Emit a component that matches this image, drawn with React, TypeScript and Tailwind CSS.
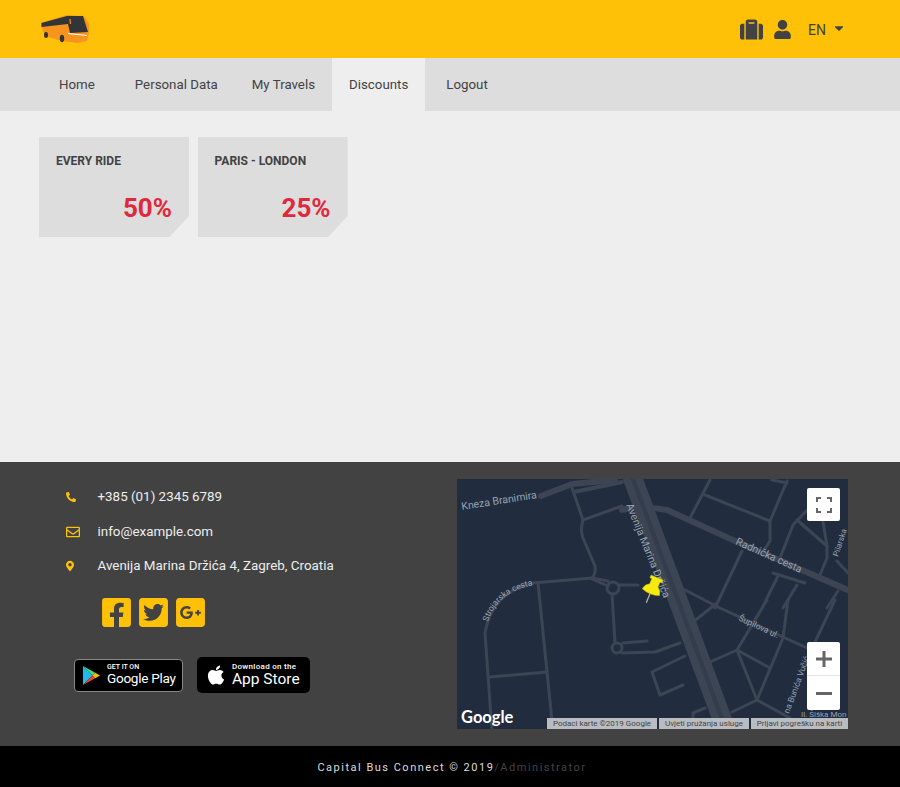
import { FaSuitcase, FaUser, FaPhone, FaRegEnvelope, FaMapMarkerAlt, FaFacebookSquare, FaTwitterSquare, FaGooglePlusSquare, FaApple, FaCaretDown } from 'react-icons/fa';

const navItems = [
  { label: 'Home', cls: 'ml-[42px]' },
  { label: 'Personal Data', cls: 'ml-[6px]' },
  { label: 'My Travels', cls: '' },
  { label: 'Discounts', cls: 'bg-[#eeeeee]' },
  { label: 'Logout', cls: 'ml-[4px]' },
];

const discounts = [
  { title: 'Every ride', value: '50%' },
  { title: 'Paris - London', value: '25%' },
];

// thin streets, in page coordinates (the svg viewBox starts at the map's corner)
const streets = [
  'M572,488 L583,520 L622,506',
  'M583,520 Q580,530 583,538 L595,566 Q596,574 592,578',
  'M533,583 L592,578 L608,581',
  'M592,579 L608,586',
  'M619,585 L638,585',
  'M538,583 L553,731',
  'M533,583 Q492,592 485,633 L492,731',
  'M490,677 L547,672',
  'M612,594 L615,642',
  'M623,643 L647,641 ',
  'M622,653 L655,652 L680,643',
  'M652,672 L685,656 M652,672 L660,695 L683,685',
  'M710,480 L690,518',
  'M705,495 L770,521',
  'M787,481 L770,521 L770,541 L763,552',
  'M772,480 L787,483',
  'M807,510 L793,525 L780,558',
  'M797,520 L827,546 L827,558 L820,575',
  'M823,522 L827,546',
  'M837,561 L850,575',
  'M742,551 L715,608',
  'M685,590 L720,608 L807,648',
  'M773,573 L805,583',
  'M778,576 L762,608',
  'M797,585 L783,608',
  'M838,591 L827,608',
  'M717,603 L693,622',
  'M767,600 L737,650 L757,700 L783,638 L788,600',
  'M835,600 L815,642',
  'M737,650 L710,662',
  'M737,650 L770,668',
  'M757,700 L732,712',
  'M757,700 L790,718',
  'M693,729 L693,713 L705,708',
];

function MapView() {
  return (
    <div className="relative w-[391px] h-[250px] overflow-hidden bg-[#212d3f]">
      <svg viewBox="457 479 391 250" className="block w-full h-full">
        <g fill="none" stroke="#3b4554" strokeLinecap="round" strokeLinejoin="round">
          <g strokeWidth="3">
            {streets.map((d) => (
              <path key={d} d={d} />
            ))}
            <circle cx="613" cy="588" r="6" />
            <circle cx="617" cy="648" r="5" />
          </g>
          <path d="M541,496 L572,484 L615,480" strokeWidth="6" />
          <path d="M574,492 L622,482" strokeWidth="4" />
          <path d="M622,510 Q640,505 667,510 L733,540 L850,591" strokeWidth="6" />
          <path d="M627,479 L722,735" strokeWidth="8" />
          <path d="M639,479 L734,735" strokeWidth="8" />
          <path d="M633,479 L728,735" strokeWidth="4" stroke="#333d4c" />
        </g>
        <g fill="#98a2b0" fontFamily="Roboto, sans-serif">
          <text x="462" y="510" fontSize="10.5" transform="rotate(-9 462 510)">Kneza Branimira</text>
          <text x="626" y="505" fontSize="10.5" transform="rotate(68 626 505)">Avenija Marina Držića</text>
          <text x="735" y="544" fontSize="10.5" transform="rotate(24 735 544)">Radnička cesta</text>
          <text x="738" y="620" fontSize="8.5" transform="rotate(25 738 620)">Šupilova ul.</text>
          <text x="838" y="557" fontSize="8" transform="rotate(-72 838 557)">Pilarska</text>
          <text x="789" y="714" fontSize="8.5" transform="rotate(-70 789 714)">na Bunića Vučić</text>
          <text x="801" y="717" fontSize="8">Il. Šiška Mon</text>
          <path id="strojarska" d="M488,622 Q497,592 534,585" fill="none" />
          <text fontSize="8.5">
            <textPath href="#strojarska">Strojarska cesta</textPath>
          </text>
        </g>
        {/* push pin */}
        <g transform="rotate(22 652 590)">
          <path d="M651.5,594 L651.5,604" stroke="#aeb2ae" strokeWidth="1.3" />
          <path d="M645.5,576.5 H658.5 V579.5 H656.5 V585 Q660.5,587.5 661,592.5 Q652,596 642.5,592.5 Q643,587.5 647.5,585 V579.5 H645.5 Z" fill="#f6ea10" stroke="#bdae10" strokeWidth="0.5" />
        </g>
      </svg>

      <div className="absolute left-[350px] top-[9px] w-[33px] h-[33px] bg-white rounded-[2px] flex items-center justify-center">
        <svg viewBox="0 0 16 16" className="w-[16px] h-[16px]" fill="none" stroke="#666666" strokeWidth="2">
          <path d="M1,5 V1 H5 M11,1 H15 V5 M15,11 V15 H11 M5,15 H1 V11" />
        </svg>
      </div>
      <div className="absolute left-[350px] top-[163px] w-[33px] h-[68px] bg-white rounded-[2px] flex flex-col items-center">
        <div className="h-[34px] w-full flex items-center justify-center border-b border-[#e6e6e6]">
          <svg viewBox="0 0 16 16" className="w-[16px] h-[16px]" fill="#666666">
            <path d="M6.5,0 H9.5 V6.5 H16 V9.5 H9.5 V16 H6.5 V9.5 H0 V6.5 H6.5 Z" />
          </svg>
        </div>
        <div className="h-[34px] w-full flex items-center justify-center">
          <div className="w-[16px] h-[3px] bg-[#666666]" />
        </div>
      </div>

      <div className="absolute left-[4px] bottom-[1px] text-white text-[16.5px] leading-[22px] font-bold font-['Lato',sans-serif]">Google</div>
      <div className="absolute right-0 bottom-0 flex gap-[2px] h-[11px] text-[8px] leading-[11px] text-[#444444] font-['Roboto',sans-serif] whitespace-nowrap">
        <span className="w-[110px] text-center bg-[#b9bcc1]">Podaci karte ©2019 Google</span>
        <span className="w-[90px] text-center bg-[#b9bcc1]">Uvjeti pružanja usluge</span>
        <span className="w-[97px] text-center bg-[#b9bcc1]">Prijavi pogrešku na karti</span>
      </div>
    </div>
  );
}

function BusLogo() {
  return (
    <svg viewBox="0 0 50 30" className="w-[50px] h-[30px]">
      <path d="M1,8.5 L27,1 L44,2 L49,10 L49,19 L47,27 L37,29 L22,27 L5,22 L1,12 Z" fill="#f7941d" />
      <path d="M1.5,9 L27,2 L43,2 L48,18 L30,19 L28,10 L1.5,13 Z" fill="#333438" />
      <path d="M30,5 L30.5,10" stroke="#f7941d" strokeWidth="1.2" />
      <path d="M28,19.5 L47,21.5" stroke="#ffffff" strokeWidth="1" />
      <ellipse cx="6" cy="21" rx="2" ry="3" fill="#333438" />
      <ellipse cx="22" cy="24.5" rx="2.2" ry="3.8" fill="#333438" />
    </svg>
  );
}

function PlayMark() {
  return (
    <svg viewBox="0 0 20 22" className="w-[19px] h-[21px]">
      <path d="M1,1 L11,11 L1,21 Z" fill="#22b8e8" />
      <path d="M1,1 L14,8 L11,11 Z" fill="#3ddc84" />
      <path d="M1,21 L14,14 L11,11 Z" fill="#ea4335" />
      <path d="M14,8 L19,11 L14,14 L11,11 Z" fill="#fbbc04" />
    </svg>
  );
}

export default function App() {
  return (
    <div className="w-[900px] h-[787px] flex flex-col overflow-hidden bg-[#eeeeee] font-['Roboto',sans-serif]">
      <header className="h-[58px] shrink-0 bg-[#ffc107] flex items-center pl-[40px]">
        <BusLogo />
        <div className="ml-auto flex items-center text-[#424242]">
          <FaSuitcase className="w-[23px] h-[23px]" />
          <FaUser className="ml-[11px] w-[17px] h-[19px]" />
          <span className="ml-[17px] mt-[2px] text-[14px] leading-none">EN</span>
          <FaCaretDown className="ml-[6px] -mt-[3px] w-[14px] h-[14px]" />
          <span className="w-[54px]" />
        </div>
      </header>

      <nav className="h-[53px] shrink-0 bg-[#dddddd] flex text-[13.3px] text-[#424242]">
        {navItems.map((item) => (
          <a key={item.label} className={`px-[17px] pt-[1px] flex items-center ${item.cls}`}>
            {item.label}
          </a>
        ))}
      </nav>

      <main className="h-[351px] shrink-0 pt-[26px] pl-[39px] flex items-start gap-[8.6px]">
        {discounts.map((d) => (
          <div
            key={d.title}
            className="w-[150px] h-[100px] bg-[#dddddd] px-[17px] pt-[17px] flex flex-col [clip-path:polygon(0_0,100%_0,100%_79%,87%_100%,0_100%)]"
          >
            <div className="text-[12px] leading-[14px] font-bold uppercase text-[#424242]">{d.title}</div>
            <div className="mt-[20px] text-right text-[26px] leading-[40px] font-bold text-[#e0283c]">{d.value}</div>
          </div>
        ))}
      </main>

      <footer className="h-[284px] shrink-0 bg-[#424242] flex">
        <div className="w-[457px] shrink-0 pt-[25px]">
          <div className="flex flex-col gap-[14.5px] text-[13.4px] leading-[20px] text-[#eeeeee]">
            <div className="flex items-center pl-[66px]">
              <FaPhone className="w-[10px] h-[10px] text-[#ffc107] -scale-x-100" />
              <span className="ml-[21.5px]">+385 (01) 2345 6789</span>
            </div>
            <div className="flex items-center pl-[66px]">
              <FaRegEnvelope className="w-[14px] h-[14px] text-[#ffc107]" />
              <span className="ml-[17.5px]">info@example.com</span>
            </div>
            <div className="flex items-center pl-[66px]">
              <FaMapMarkerAlt className="w-[8px] h-[12px] text-[#ffc107]" />
              <span className="ml-[23.5px]">Avenija Marina Držića 4, Zagreb, Croatia</span>
            </div>
          </div>

          <div className="mt-[20px] pl-[102px] flex gap-[8px] text-[#ffc107]">
            <FaFacebookSquare className="w-[29px] h-[33px]" />
            <FaTwitterSquare className="w-[29px] h-[33px]" />
            <FaGooglePlusSquare className="w-[29px] h-[33px]" />
          </div>

          <div className="mt-[28px] pl-[74px] flex items-center gap-[14px] text-white">
            <div className="w-[109px] h-[33px] bg-black border border-[#888888] rounded-[4px] flex items-center pl-[7px]">
              <PlayMark />
              <div className="ml-[6px] flex flex-col">
                <span className="text-[7px] leading-[7px] font-medium">GET IT ON</span>
                <span className="text-[13.6px] leading-[15px] tracking-[-0.3px]">Google Play</span>
              </div>
            </div>
            <div className="w-[113px] h-[36px] bg-black rounded-[5px] flex items-center pl-[9px]">
              <FaApple className="w-[20px] h-[22px]" />
              <div className="ml-[6px] flex flex-col">
                <span className="text-[8px] leading-[9px] font-medium tracking-[0.3px]">Download on the</span>
                <span className="text-[15.5px] leading-[17px]">App Store</span>
              </div>
            </div>
          </div>
        </div>
        <div className="pt-[17px]">
          <MapView />
        </div>
      </footer>

      <div className="h-[41px] shrink-0 bg-black pt-[3px] pl-[4px] flex items-center justify-center text-[11px] tracking-[1.5px] text-[#dddddd]">
        <span>Capital Bus Connect © 2019</span>
        <span className="text-[#444444]">/Administrator</span>
      </div>
    </div>
  );
}
